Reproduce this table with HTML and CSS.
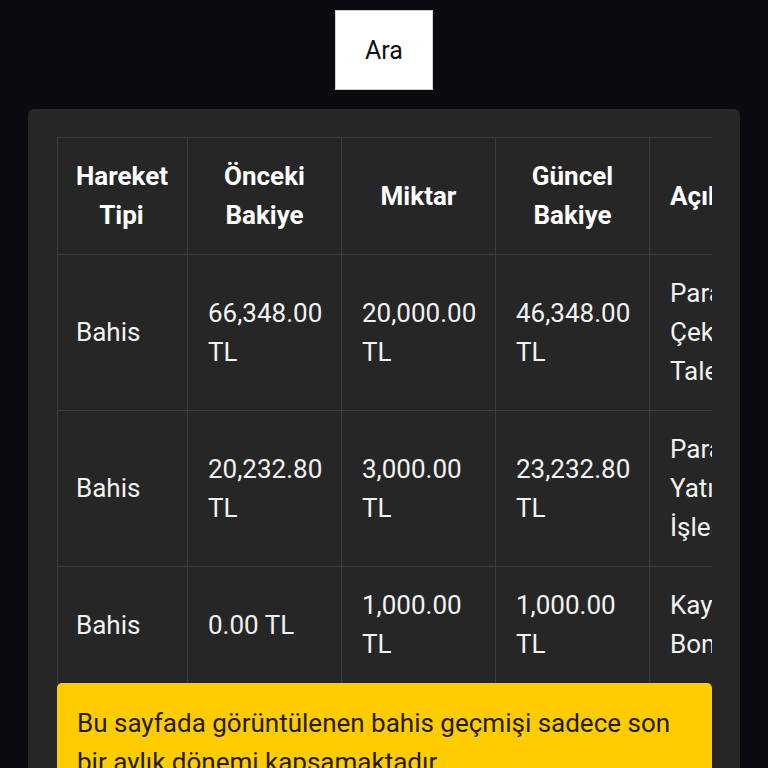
FILE: index.html
```html
<!DOCTYPE html>
<html lang="tr">
<head>
<meta charset="utf-8">
<title>Bahis Geçmişi</title>
<link rel="stylesheet" href="styles.css">
</head>
<body>
<div class="page">
  <div class="actions">
    <button class="search-btn" type="button">Ara</button>
  </div>
  <section class="card">
    <div class="table-wrap">
      <table class="history">
        <colgroup>
          <col class="c-type">
          <col class="c-num">
          <col class="c-num">
          <col class="c-num">
          <col class="c-desc">
        </colgroup>
        <thead>
          <tr>
            <th>Hareket Tipi</th>
            <th>Önceki Bakiye</th>
            <th>Miktar</th>
            <th>Güncel Bakiye</th>
            <th class="h-desc">Açıklama</th>
          </tr>
        </thead>
        <tbody>
          <tr>
            <td>Bahis</td>
            <td>66,348.00 TL</td>
            <td>20,000.00 TL</td>
            <td>46,348.00 TL</td>
            <td>Para Çekme Talebi</td>
          </tr>
          <tr>
            <td>Bahis</td>
            <td>20,232.80 TL</td>
            <td>3,000.00 TL</td>
            <td>23,232.80 TL</td>
            <td>Para Yatırma İşlemi</td>
          </tr>
          <tr>
            <td>Bahis</td>
            <td>0.00 TL</td>
            <td>1,000.00 TL</td>
            <td>1,000.00 TL</td>
            <td>Kayıt Bonusu</td>
          </tr>
        </tbody>
      </table>
    </div>
    <div class="notice">Bu sayfada görüntülenen bahis geçmişi sadece son bir aylık dönemi kapsamaktadır.</div>
  </section>
</div>
</body>
</html>
```
FILE: styles.css
```css
html, body {
  margin: 0;
  padding: 0;
  background: #0b0b0f;
  font-family: Roboto, "Noto Sans", "Liberation Sans", sans-serif;
  color: #f2f2f2;
}

.page {
  padding: 10px 28px 0;
  display: flex;
  flex-direction: column;
  gap: 19px;
}

.actions {
  display: flex;
  justify-content: center;
}

.search-btn {
  width: 98px;
  height: 80px;
  background: #ffffff;
  border: 1px solid #d0d0d0;
  border-radius: 0;
  font-family: Roboto, "Noto Sans", sans-serif;
  font-size: 25px;
  color: #111;
  padding: 0;
}

.card {
  background: #262626;
  border-radius: 6px;
  padding: 28px 28px 40px 29px;
  min-height: 700px;
}

.table-wrap {
  overflow: hidden;
  width: 655px;
}

.history {
  border-collapse: collapse;
  table-layout: fixed;
  width: 746px;
  font-size: 26px;
  line-height: 39px;
}

.c-type { width: 130px; }
.c-num { width: 154px; }
.c-desc { width: 154px; }

.history th,
.history td {
  box-sizing: border-box;
  border: 1px solid #3c3c3c;
  padding: 19px 20px;
  vertical-align: middle;
}

.history th:first-child,
.history td:first-child {
  padding-left: 18px;
}

.history th {
  font-weight: 700;
  color: #ffffff;
  text-align: center;
}

.history th.h-desc {
  text-align: left;
}

.history td {
  text-align: left;
  color: #f2f2f2;
}

.notice {
  width: 615px;
  background: #ffcc00;
  color: #231c00;
  border-radius: 5px;
  padding: 21px 20px 19px;
  font-size: 26px;
  line-height: 39px;
  margin-top: -1px;
}
```
